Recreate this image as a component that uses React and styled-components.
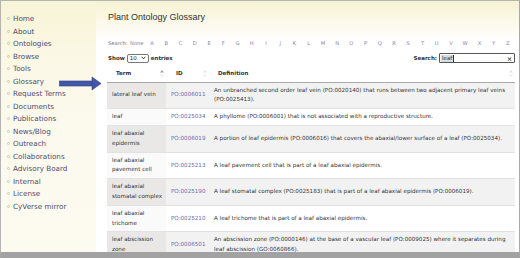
import React from "react";
import styled, { createGlobalStyle } from "styled-components";

const GlobalStyle = createGlobalStyle`
  html, body { margin: 0; padding: 0; background: #ffffff; }
  * { box-sizing: border-box; }
`;

const Frame = styled.div`
  position: relative;
  width: 520px;
  height: 258px;
  overflow: hidden;
  display: flex;
  border-top: 1px solid #b4b4b4;
  border-left: 1px solid #b4b4b4;
  border-right: 1px solid #a8a8a8;
  border-bottom: 6px solid #a2a2a2;
  background: #fff;
`;

const Sidebar = styled.nav`
  width: 95px;
  flex: none;
  background: linear-gradient(180deg, #f8f4d6 0px, #fbf8e6 60px, #fcfaee 140px, #fcfbf0 100%);
  padding: 11.7px 0 0 6px;
`;

const NavList = styled.ul`
  list-style: none;
  margin: 0;
  padding: 0;
`;

const NavItem = styled.li`
  display: flex;
  align-items: center;
  gap: 3px;
  height: 12.5px;
  font-family: "DejaVu Sans", Verdana, sans-serif;
  font-size: 7.2px;
  color: #4d4b70;
  white-space: nowrap;
`;

const Bullet = styled.span`
  width: 3px;
  height: 3px;
  border-radius: 50%;
  border: 0.6px solid #cfc9a2;
  flex: none;
`;

const Main = styled.main`
  flex: 1;
  min-width: 0;
  padding: 10px 4px 0 11px;
  background: linear-gradient(180deg, #f7f2d2 0px, #fbf8e6 18px, #fefdf8 34px, #ffffff 42px, #ffffff 100%);
`;

const Title = styled.h1`
  margin: 0;
  padding-left: 1px;
  font-family: "Liberation Sans", Arial, sans-serif;
  font-weight: normal;
  font-size: 9px;
  line-height: 12px;
  color: #333333;
`;

const LettersRow = styled.div`
  margin-top: 16px;
  height: 8px;
  display: flex;
  align-items: center;
  font-family: "DejaVu Sans", Verdana, sans-serif;
  font-size: 5.2px;
  color: #8586a8;
`;

const LettersLabel = styled.span`
  width: 23px;
  padding-left: 1px;
  color: #6f6f80;
`;

const NoneLink = styled.span`
  width: 15px;
`;

const LetterGrid = styled.div`
  width: 370px;
  display: grid;
  grid-template-columns: repeat(26, 1fr);
  text-align: center;
`;

const ControlsRow = styled.div`
  margin-top: 6px;
  height: 10px;
  display: flex;
  align-items: center;
  justify-content: space-between;
  font-family: "DejaVu Sans", Verdana, sans-serif;
  font-size: 5.5px;
  font-weight: bold;
  color: #333;
`;

const Group = styled.div`
  display: flex;
  align-items: center;
  gap: 2px;
  padding-left: 1px;
`;

const SelectBox = styled.span`
  display: inline-flex;
  align-items: center;
  justify-content: space-between;
  width: 22px;
  height: 9px;
  padding: 0 2px;
  border: 1px solid #777;
  border-radius: 2px;
  background: #fff;
  font-weight: normal;
  color: #222;
`;

const SearchBox = styled.span`
  display: inline-flex;
  align-items: center;
  justify-content: space-between;
  width: 76px;
  height: 10px;
  padding: 0 2px 0 1px;
  border: 1px solid #555;
  border-radius: 1px;
  background: #fff;
  font-weight: normal;
  color: #333;
`;

const Selected = styled.span`
  background: #d6dbe6;
  border-right: 0.8px solid #333;
  padding: 0 1px;
  line-height: 7px;
`;

const Clear = styled.span`
  font-weight: bold;
  font-size: 6px;
  color: #333;
`;

const Table = styled.table`
  margin-top: 3px;
  width: 408px;
  border-collapse: collapse;
  table-layout: fixed;
  font-family: "DejaVu Sans", Verdana, sans-serif;
  font-size: 5.6px;
  line-height: 9.6px;
  color: #333;
`;

const Th = styled.th`
  height: 16px;
  padding: 0 2px 0 ${(p) => p.$pl}px;
  font-size: 5.5px;
  text-align: left;
  font-weight: bold;
  border-bottom: 1px solid #a9a9a9;
`;

const ThInner = styled.div`
  display: flex;
  align-items: center;
  justify-content: space-between;
`;

const Tr = styled.tr`
  background: ${(p) => (p.$odd ? "#f2f2f2" : "#ffffff")};
  border-bottom: 1px solid #e2e2e2;
`;

const Td = styled.td`
  padding: 3.2px ${(p) => p.$pr || 1}px 3.2px 5px;
  vertical-align: middle;
  background: ${(p) => (p.$sorted ? (p.$odd ? "#e9e8e6" : "#fafafa") : "transparent")};
`;

const IdLink = styled.span`
  color: #6c6aa8;
`;

function SortIcon({ active }) {
  return (
    <svg width="4" height="7" viewBox="0 0 4 7">
      <polygon points="2,0 4,2.6 0,2.6" fill={active ? "#a0a0a0" : "#e4e4e4"} />
      <polygon points="0,4.4 4,4.4 2,7" fill="#ececec" />
    </svg>
  );
}

function Chevron() {
  return (
    <svg width="5" height="4" viewBox="0 0 5 4">
      <polyline points="0.6,0.8 2.5,2.8 4.4,0.8" fill="none" stroke="#222" strokeWidth="0.9" />
    </svg>
  );
}

const ArrowSvg = styled.svg`
  position: absolute;
  left: 58px;
  top: 75px;
`;

const navItems = [
  "Home", "About", "Ontologies", "Browse", "Tools", "Glossary", "Request Terms",
  "Documents", "Publications", "News/Blog", "Outreach", "Collaborations",
  "Advisory Board", "Internal", "License", "CyVerse mirror",
];

const letters = "ABCDEFGHIJKLMNOPQRSTUVWXYZ".split("");

const rows = [
  { term: "lateral leaf vein", id: "PO:0006011", def: "An unbranched second order leaf vein (PO:0020140) that runs between two adjacent primary leaf veins (PO:0025413)." },
  { term: "leaf", id: "PO:0025034", def: "A phyllome (PO:0006001) that is not associated with a reproductive structure." },
  { term: "leaf abaxial epidermis", id: "PO:0006019", def: "A portion of leaf epidermis (PO:0006016) that covers the abaxial/lower surface of a leaf (PO:0025034)." },
  { term: "leaf abaxial pavement cell", id: "PO:0025213", def: "A leaf pavement cell that is part of a leaf abaxial epidermis." },
  { term: "leaf abaxial stomatal complex", id: "PO:0025190", def: "A leaf stomatal complex (PO:0025183) that is part of a leaf abaxial epidermis (PO:0006019)." },
  { term: "leaf abaxial trichome", id: "PO:0025210", def: "A leaf trichome that is part of a leaf abaxial epidermis." },
  { term: "leaf abscission zone", id: "PO:0006501", def: "An abscission zone (PO:0000146) at the base of a vascular leaf (PO:0009025) where it separates during leaf abscission (GO:0060866)." },
];

export default function App() {
  return (
    <>
      <GlobalStyle />
      <Frame>
        <Sidebar>
          <NavList>
            {navItems.map((n) => (
              <NavItem key={n}>
                <Bullet />
                {n}
              </NavItem>
            ))}
          </NavList>
        </Sidebar>
        <Main>
          <Title>Plant Ontology Glossary</Title>
          <LettersRow>
            <LettersLabel>Search:</LettersLabel>
            <NoneLink>None</NoneLink>
            <LetterGrid>
              {letters.map((l) => (
                <span key={l}>{l}</span>
              ))}
            </LetterGrid>
          </LettersRow>
          <ControlsRow>
            <Group>
              Show
              <SelectBox>
                10 <Chevron />
              </SelectBox>
              entries
            </Group>
            <Group>
              Search:
              <SearchBox>
                <Selected>leaf</Selected>
                <Clear>×</Clear>
              </SearchBox>
            </Group>
          </ControlsRow>
          <Table>
            <colgroup>
              <col style={{ width: "59px" }} />
              <col style={{ width: "43px" }} />
              <col />
            </colgroup>
            <thead>
              <tr>
                <Th $pl={9}>
                  <ThInner>
                    Term <SortIcon active />
                  </ThInner>
                </Th>
                <Th $pl={10}>
                  <ThInner>
                    ID <SortIcon />
                  </ThInner>
                </Th>
                <Th $pl={9}>
                  <ThInner>
                    Definition <SortIcon />
                  </ThInner>
                </Th>
              </tr>
            </thead>
            <tbody>
              {rows.map((r, i) => {
                const odd = i % 2 === 0;
                return (
                  <Tr key={r.id} $odd={odd}>
                    <Td $sorted $odd={odd}>{r.term}</Td>
                    <Td><IdLink>{r.id}</IdLink></Td>
                    <Td $pr={4}>{r.def}</Td>
                  </Tr>
                );
              })}
            </tbody>
          </Table>
        </Main>
        <ArrowSvg width="44" height="15" viewBox="0 0 44 15">
          <rect x="0.5" y="5" width="33" height="5" fill="#4358a8" stroke="#2d3e86" strokeWidth="0.6" />
          <polygon points="33,1 42,7.5 33,14" fill="#4358a8" stroke="#2d3e86" strokeWidth="0.6" />
        </ArrowSvg>
      </Frame>
    </>
  );
}
